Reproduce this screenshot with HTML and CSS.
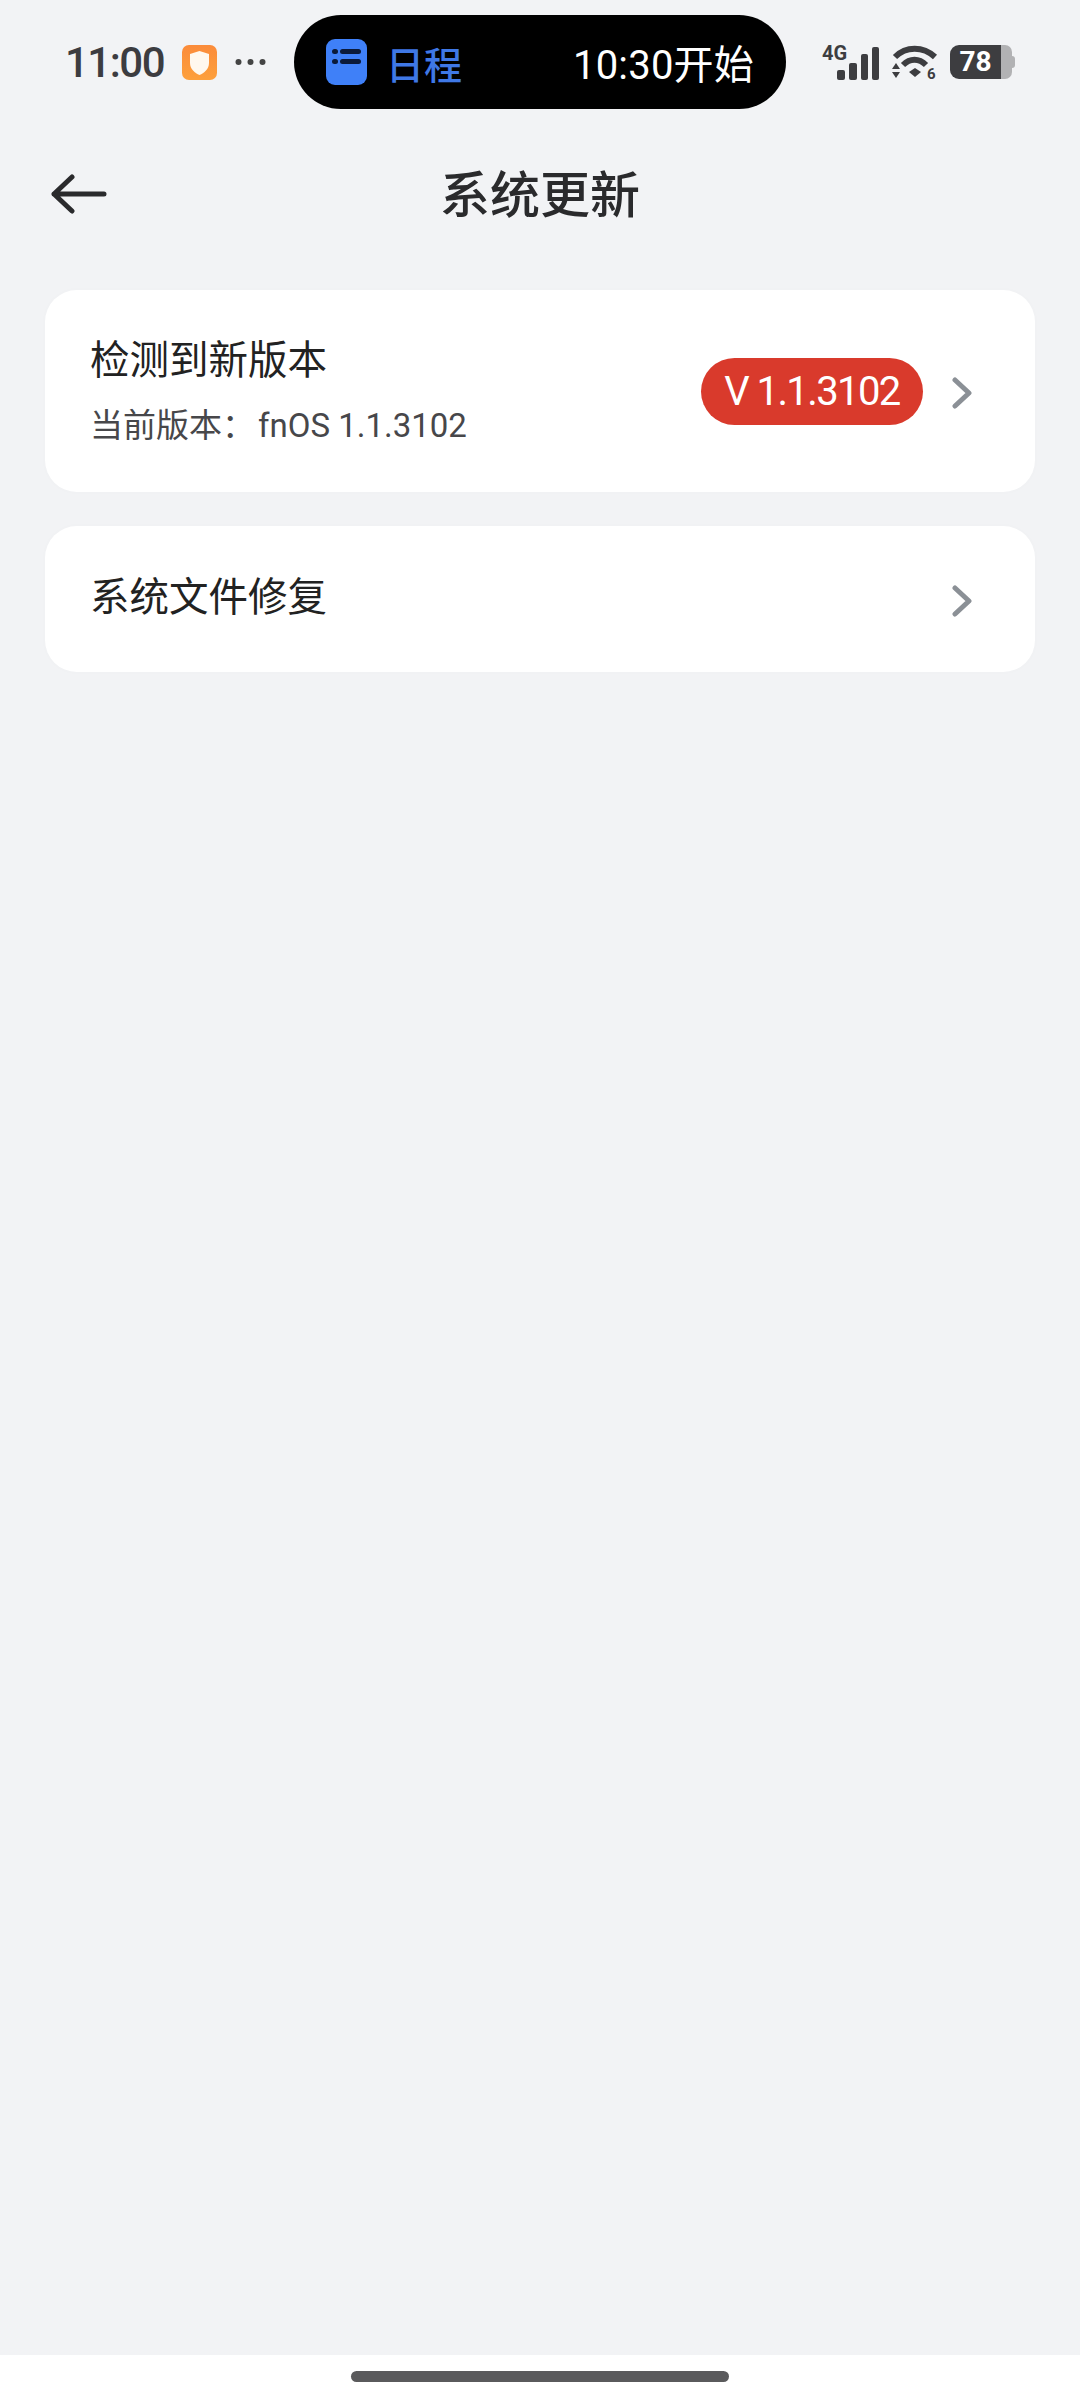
FILE: index.html
```html
<!DOCTYPE html>
<html lang="zh-CN">
<head>
    <meta charset="UTF-8">
    <meta name="viewport" content="width=device-width, initial-scale=1.0">
    <title>系统更新</title>
    <link rel="stylesheet" href="styles.css">
</head>
<body>
    <div class="page">
        <div class="status-bar">
            <span class="clock">11:00</span>
            <svg class="shield-icon" width="35" height="35" viewBox="0 0 35 35">
                <defs>
                    <linearGradient id="shieldBg" x1="0" y1="0" x2="0" y2="1">
                        <stop offset="0" stop-color="#fb8b3a"/>
                        <stop offset="1" stop-color="#fda03c"/>
                    </linearGradient>
                </defs>
                <rect width="35" height="35" rx="7" fill="url(#shieldBg)"/>
                <path d="M17.5 6 L27 9 V18 C27 24 22 28 17.5 30 C13 28 8 24 8 18 V9 Z" fill="#fff8ee"/>
            </svg>
            <svg class="dots-icon" width="31" height="8" viewBox="0 0 31 8">
                <circle cx="3.5" cy="4" r="3" fill="#444"/>
                <circle cx="15.5" cy="4" r="3" fill="#444"/>
                <circle cx="27.5" cy="4" r="3" fill="#444"/>
            </svg>

            <div class="island">
                <svg class="calendar-icon" width="41" height="46" viewBox="0 0 41 46">
                    <rect width="41" height="46" rx="9" fill="#3f80f8"/>
                    <rect x="6" y="10" width="6" height="5" rx="2.5" fill="#0b1a3a"/>
                    <rect x="14" y="10" width="21" height="5" rx="2.5" fill="#0b1a3a"/>
                    <rect x="6" y="20" width="6" height="5" rx="2.5" fill="#0b1a3a"/>
                    <rect x="14" y="20" width="21" height="5" rx="2.5" fill="#0b1a3a"/>
                </svg>
                <span class="island-label">日程</span>
                <span class="island-time">10:30开始</span>
            </div>

            <div class="status-icons">
                <svg class="signal-icon" width="57" height="37" viewBox="0 0 57 37">
                    <text x="0" y="16" class="signal-text">4G</text>
                    <rect x="15" y="26" width="8" height="10" rx="2" fill="#3d3d40"/>
                    <rect x="27" y="19" width="8" height="17" rx="2" fill="#3d3d40"/>
                    <rect x="39" y="10" width="7" height="26" rx="2" fill="#3d3d40"/>
                    <rect x="50" y="3" width="7" height="33" rx="2" fill="#3d3d40"/>
                </svg>
                <svg class="wifi-icon" width="47" height="36" viewBox="0 0 47 36">
                    <path d="M4 13 C15 2 32 2 44 13" fill="none" stroke="#3d3d40" stroke-width="6"/>
                    <path d="M12 21 C19 14 28 14 35 21" fill="none" stroke="#3d3d40" stroke-width="6"/>
                    <path d="M18 28 L24 24 L30 28 L24 33 Z" fill="#3d3d40"/>
                    <path d="M5 19 L9 25 H1 Z" fill="#3d3d40"/>
                    <path d="M5 34 L9 28 H1 Z" fill="#3d3d40"/>
                    <text x="36" y="35" class="wifi-text">6</text>
                </svg>
                <div class="battery">
                    <div class="battery-level">78</div>
                    <div class="battery-rest"></div>
                    <div class="battery-cap"></div>
                </div>
            </div>
        </div>

        <div class="header">
            <svg class="back-icon" width="56" height="40" viewBox="0 0 56 40">
                <path d="M21 3 L3 20 L21 37 M3 20 H53" fill="none" stroke="#2a2a2c" stroke-width="5" stroke-linecap="round" stroke-linejoin="round"/>
            </svg>
            <h1 class="title">系统更新</h1>
            <div></div>
        </div>

        <div class="main">
            <div class="card card-update">
                <div class="card-text">
                    <div class="card-title">检测到新版本</div>
                    <div class="card-sub"><span class="card-sub-label">当前版本：</span>fnOS 1.1.3102</div>
                </div>
                <span class="version-badge">V 1.1.3102</span>
                <svg class="chevron" width="20" height="32" viewBox="0 0 20 32">
                    <path d="M3 3 L17 16 L3 29" fill="none" stroke="#8b9096" stroke-width="5" stroke-linecap="round" stroke-linejoin="round"/>
                </svg>
            </div>
            <div class="card card-repair">
                <div class="card-title">系统文件修复</div>
                <svg class="chevron" width="20" height="32" viewBox="0 0 20 32">
                    <path d="M3 3 L17 16 L3 29" fill="none" stroke="#8b9096" stroke-width="5" stroke-linecap="round" stroke-linejoin="round"/>
                </svg>
            </div>
        </div>

        <div class="home-bar">
            <div class="home-handle"></div>
        </div>
    </div>
</body>
</html>
```

FILE: styles.css
```css
body {
    margin: 0;
    background-color: #f2f3f5;
    font-family: Roboto, "Noto Sans CJK SC", sans-serif;
}
.page {
    display: flex;
    flex-direction: column;
    height: 2400px;
}
.status-bar {
    display: flex;
    align-items: center;
    height: 94px;
    padding: 15px 0 15px 65px;
}
.clock {
    flex: none;
    width: 99px;
    font-size: 42px;
    font-weight: 500;
    letter-spacing: -1.5px;
    color: #3c3c40;
    white-space: nowrap;
}
.shield-icon,
.dots-icon {
    flex: none;
    margin-left: 18px;
}
.island {
    flex: none;
    display: flex;
    align-items: center;
    width: 492px;
    height: 94px;
    margin-left: 28px;
    padding: 0 32px;
    box-sizing: border-box;
    background: #000;
    border-radius: 47px;
}
.island-label {
    margin-left: 19px;
    font-size: 38px;
    font-weight: 500;
    color: #3f78e6;
    white-space: nowrap;
}
.island-time {
    margin-left: auto;
    font-size: 40px;
    letter-spacing: 0.2px;
    color: #fff;
    white-space: nowrap;
}
.status-icons {
    flex: none;
    display: flex;
    align-items: center;
    margin-left: 36px;
}
.signal-text {
    font-size: 20px;
    font-weight: 700;
    fill: #3d3d40;
}
.wifi-text {
    font-size: 15px;
    font-weight: 700;
    fill: #3d3d40;
}
.wifi-icon {
    margin-left: 12px;
}
.battery {
    display: flex;
    align-items: center;
    margin-left: 12px;
}
.battery-level {
    width: 51px;
    height: 34px;
    background: #3d3d40;
    border-radius: 9px 0 0 9px;
    color: #fff;
    font-size: 28px;
    font-weight: 700;
    line-height: 34px;
    text-align: center;
}
.battery-rest {
    width: 11px;
    height: 34px;
    background: #b2b2b4;
    border-radius: 0 7px 7px 0;
}
.battery-cap {
    width: 3px;
    height: 12px;
    background: #b2b2b4;
    border-radius: 0 3px 3px 0;
}
.header {
    display: grid;
    grid-template-columns: 1fr auto 1fr;
    align-items: center;
    height: 134px;
    padding: 0 51px 6px 51px;
}
.back-icon {
    margin-top: 6px;
}
.title {
    margin: 0;
    font-size: 50px;
    font-weight: 500;
    color: #2a2a2c;
}
.main {
    flex: 1;
    display: flex;
    flex-direction: column;
    gap: 34px;
    padding: 26px 45px 0 45px;
}
.card {
    display: flex;
    align-items: center;
    padding: 0 63px 0 45px;
    background: #fff;
    border-radius: 32px;
    box-shadow: 0 0 6px rgba(0,0,0,0.015);
}
.card-update {
    height: 202px;
}
.card-repair {
    height: 146px;
}
.card-text {
    flex: 1;
    padding-top: 2px;
}
.card-title {
    font-size: 39.5px;
    color: #222;
    line-height: 50px;
}
.card-repair .card-title {
    flex: 1;
    margin-top: -2px;
}
.card-sub {
    margin-top: 18px;
    font-size: 33px;
    color: #47474a;
    line-height: 44px;
}
.card-sub-label {
    margin-right: 3px;
}
.version-badge {
    margin-right: 29px;
    width: 222px;
    height: 67px;
    line-height: 67px;
    text-align: center;
    background: #d93a2c;
    border-radius: 34px;
    color: #fff;
    font-size: 40px;
    letter-spacing: -1.6px;
}
.chevron {
    margin-top: 4px;
}
.home-bar {
    display: flex;
    justify-content: center;
    height: 45px;
    padding-top: 16px;
    box-sizing: border-box;
    background: #fff;
}
.home-handle {
    width: 378px;
    height: 11px;
    background: #5a5a5c;
    border-radius: 6px;
}
```
